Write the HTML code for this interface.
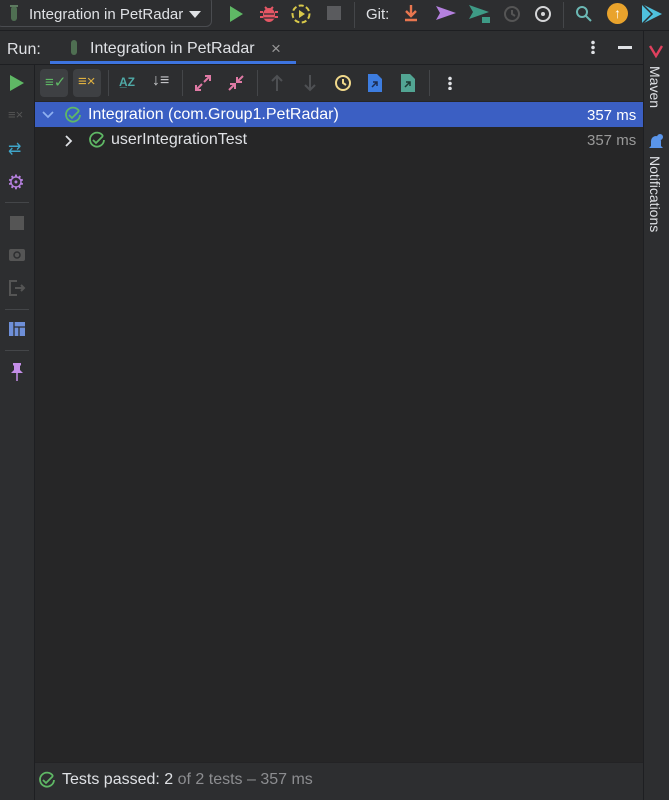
<!DOCTYPE html><html><head><style>
*{margin:0;padding:0;box-sizing:border-box}
body{width:669px;height:800px;background:#2d2e30;font-family:"Liberation Sans",sans-serif;color:#dfe1e5;position:relative;overflow:hidden;font-size:15px}
.a{position:absolute}
.sep{position:absolute;background:#444649}
</style></head><body>
<div class="a" style="left:0;top:0;width:669px;height:31px;background:#2d2e30;border-bottom:1px solid #1e1f22"></div>
<div class="a" style="left:-4px;top:-4px;width:216px;height:31px;border:1px solid #4a4c50;border-radius:6px"></div>
<svg class="a" style="left:8px;top:5px" width="12" height="18"><rect x="3" y="1" width="6" height="15" rx="3" fill="#4f6f52"/><rect x="2" y="0" width="8" height="2" fill="#5d7a60"/></svg>
<div class="a" style="left:29px;top:6px;font-size:15px">Integration in PetRadar</div>
<svg class="a" style="left:188px;top:9px" width="14" height="10"><path d="M1 2h12L7 9z" fill="#dfe1e5"/></svg>
<svg class="a" style="left:228px;top:5px" width="16" height="18"><path d="M2 1l13 8-13 8z" fill="#5fb865"/></svg>
<svg class="a" style="left:259px;top:4px" width="20" height="20"><ellipse cx="10" cy="11" rx="6" ry="7" fill="#e55765"/><path d="M4 8H1M4 13H1M16 8h3M16 13h3M6 3l2 2M14 3l-2 2" stroke="#e55765" stroke-width="2"/><path d="M5 10h10M5 14h10" stroke="#2d2e30" stroke-width="1.3"/></svg>
<svg class="a" style="left:290px;top:3px" width="22" height="22"><circle cx="11" cy="11" r="8.5" fill="none" stroke="#d9c94a" stroke-width="2" stroke-dasharray="5 2.5"/><path d="M9 7l6 4-6 4z" fill="#d9c94a"/></svg>
<div class="a" style="left:327px;top:6px;width:14px;height:14px;background:#5a5b5e"></div>
<div class="sep" style="left:354px;top:2px;width:1px;height:26px"></div>
<div class="a" style="left:366px;top:6px;color:#dfe1e5">Git:</div>
<svg class="a" style="left:403px;top:4px" width="16" height="20"><path d="M8 1v10M3 7l5 5 5-5M2 16h12" stroke="#e8764f" stroke-width="2.4" fill="none"/></svg>
<svg class="a" style="left:435px;top:4px" width="22" height="18"><path d="M1 2l20 7-20 7 4-7z" fill="#b480de"/></svg>
<svg class="a" style="left:468px;top:3px" width="24" height="22"><path d="M1 2l20 7-20 7 4-7z" fill="#3e9b86"/><rect x="14" y="14" width="8" height="6" fill="#3e9b86"/></svg>
<svg class="a" style="left:502px;top:4px" width="20" height="20"><circle cx="10" cy="10" r="7" fill="none" stroke="#555" stroke-width="2"/><path d="M10 6v4l3 2" stroke="#555" stroke-width="2" fill="none"/></svg>
<svg class="a" style="left:533px;top:4px" width="20" height="20"><circle cx="10" cy="10" r="7" fill="none" stroke="#d5d6d8" stroke-width="2"/><circle cx="10" cy="10" r="2" fill="#d5d6d8"/></svg>
<div class="sep" style="left:563px;top:2px;width:1px;height:26px"></div>
<svg class="a" style="left:575px;top:5px" width="18" height="18"><circle cx="7" cy="7" r="5" fill="none" stroke="#6bb8b4" stroke-width="2"/><path d="M11 11l5 5" stroke="#6bb8b4" stroke-width="2"/></svg>
<div class="a" style="left:607px;top:3px;width:21px;height:21px;border-radius:50%;background:#e9a32c;color:#fff;font-size:14px;text-align:center;line-height:21px;font-weight:bold">↑</div>
<svg class="a" style="left:640px;top:3px" width="24" height="22"><path d="M2 1l20 10-20 10z" fill="#4fc1dd"/><path d="M2 1l10 10L2 21" stroke="#2d2e30" stroke-width="1.5" fill="none"/></svg>
<div class="a" style="left:7px;top:41px;font-size:16px;color:#dfe1e5">Run:</div>
<svg class="a" style="left:69px;top:39px" width="10" height="18"><rect x="2" y="1" width="6" height="15" rx="3" fill="#4f6f52"/></svg>
<div class="a" style="left:90px;top:40px;font-size:16px">Integration in PetRadar</div>
<div class="a" style="left:271px;top:39px;color:#999;font-size:17px">×</div>
<div class="a" style="left:50px;top:61px;width:246px;height:3px;background:#3d74e0"></div>
<div class="a" style="left:591px;top:40px;width:4px;height:14px;background:radial-gradient(circle,#dfe1e5 1.6px,transparent 2px) 0 0/4px 5px"></div>
<div class="a" style="left:618px;top:46px;width:14px;height:3px;background:#dfe1e5"></div>
<div class="a" style="left:0;top:64px;width:643px;height:1px;background:#1e1f22"></div>
<div class="a" style="left:34px;top:65px;width:1px;height:735px;background:#1e1f22"></div>
<svg class="a" style="left:9px;top:74px" width="16" height="18"><path d="M1 1l14 8-14 8z" fill="#5fb865"/></svg>
<div class="a" style="left:8px;top:107px;color:#555;font-size:13px">≡×</div>
<div class="a" style="left:8px;top:139px;color:#3fa5c9;font-size:16px">⇄</div>
<div class="a" style="left:7px;top:170px;color:#b580de;font-size:20px">⚙</div>
<div class="sep" style="left:5px;top:202px;width:24px;height:1px"></div>
<div class="a" style="left:10px;top:216px;width:14px;height:14px;background:#555"></div>
<svg class="a" style="left:8px;top:246px" width="18" height="16"><rect x="1" y="3" width="16" height="12" rx="2" fill="#555"/><circle cx="9" cy="9" r="3" fill="none" stroke="#2d2e30" stroke-width="1.5"/></svg>
<svg class="a" style="left:8px;top:279px" width="18" height="18"><path d="M9 2H2v14h7" stroke="#555" stroke-width="2" fill="none"/><path d="M7 9h9M13 6l3 3-3 3" stroke="#555" stroke-width="2" fill="none"/></svg>
<div class="sep" style="left:5px;top:309px;width:24px;height:1px"></div>
<svg class="a" style="left:9px;top:322px" width="16" height="14"><rect width="16" height="14" fill="#6e8fd8"/><path d="M5 0v14M5 5h11M10 5v9" stroke="#2d2e30" stroke-width="1.3"/></svg>
<div class="sep" style="left:5px;top:350px;width:24px;height:1px"></div>
<svg class="a" style="left:10px;top:362px" width="14" height="20"><path d="M3 1h8v2l-1 1v4l3 3H1l3-3V4L3 3z" fill="#c48ee8"/><path d="M7 11v8" stroke="#c48ee8" stroke-width="1.5"/></svg>
<div class="a" style="left:35px;top:101px;width:608px;height:661px;background:#262627"></div>
<div class="a" style="left:35px;top:762px;width:608px;height:38px;background:#2d2e30;border-top:1px solid #232325"></div>
<div class="a" style="left:40px;top:69px;width:28px;height:28px;border-radius:4px;background:#3e4043"></div>
<div class="a" style="left:73px;top:69px;width:28px;height:28px;border-radius:4px;background:#3e4043"></div>
<div class="a" style="left:45px;top:73px;color:#5fb865;font-size:15px">≡✓</div>
<div class="a" style="left:78px;top:73px;color:#e0b140;font-size:15px">≡×</div>
<div class="sep" style="left:108px;top:70px;width:1px;height:26px"></div>
<div class="a" style="left:119px;top:75px;color:#4faaa7;font-size:12px;font-weight:bold">A̲Z</div>
<div class="a" style="left:152px;top:72px;color:#c4c5c8;font-size:16px">↓≡</div>
<div class="sep" style="left:182px;top:70px;width:1px;height:26px"></div>
<svg class="a" style="left:194px;top:74px" width="18" height="18"><path d="M10 8l6-6M11 2h5v5M8 10l-6 6M2 11v5h5" stroke="#e07aa5" stroke-width="2" fill="none"/></svg>
<svg class="a" style="left:227px;top:74px" width="18" height="18"><path d="M16 2l-6 6M10 3v5h5M2 16l6-6M3 10h5v5" stroke="#e07aa5" stroke-width="2" fill="none"/></svg>
<div class="sep" style="left:257px;top:70px;width:1px;height:26px"></div>
<svg class="a" style="left:270px;top:74px" width="14" height="18"><path d="M7 17V2M2 7l5-5 5 5" stroke="#4e5053" stroke-width="2" fill="none"/></svg>
<svg class="a" style="left:303px;top:74px" width="14" height="18"><path d="M7 1v15M2 11l5 5 5-5" stroke="#4e5053" stroke-width="2" fill="none"/></svg>
<svg class="a" style="left:333px;top:74px" width="20" height="18"><circle cx="10" cy="9" r="7" fill="none" stroke="#f0d88a" stroke-width="2"/><path d="M10 5v4l3 2" stroke="#f0d88a" stroke-width="2" fill="none"/></svg>
<svg class="a" style="left:368px;top:74px" width="14" height="18"><path d="M0 0h9l5 5v13H0z" fill="#3d7de0"/><path d="M4 13l5-5M5 8h4v4" stroke="#1d2c50" stroke-width="1.5" fill="none"/></svg>
<svg class="a" style="left:401px;top:74px" width="14" height="18"><path d="M0 0h9l5 5v13H0z" fill="#52a593"/><path d="M4 13l5-5M5 8h4v4" stroke="#1d3a33" stroke-width="1.5" fill="none"/></svg>
<div class="sep" style="left:429px;top:70px;width:1px;height:26px"></div>
<div class="a" style="left:448px;top:76px;width:4px;height:14px;background:radial-gradient(circle,#dfe1e5 1.6px,transparent 2px) 0 0/4px 5px"></div>
<div class="a" style="left:35px;top:102px;width:608px;height:25px;background:#3b5fc3"></div>
<svg class="a" style="left:41px;top:110px" width="14" height="10"><path d="M2 2l5 5 5-5" stroke="#8fb0f0" stroke-width="1.7" fill="none"/></svg>
<svg class="a" style="left:64px;top:106px" width="18" height="18"><path d="M15 5A7 7 0 1 0 16 9" stroke="#5fb865" stroke-width="1.8" fill="none"/><path d="M5 9l3 3 7-7" stroke="#5fb865" stroke-width="1.8" fill="none"/></svg>
<div class="a" style="left:88px;top:106px;font-size:16px;color:#fff">Integration (com.Group1.PetRadar)</div>
<div class="a" style="left:587px;top:107px;font-size:15px;color:#fff">357 ms</div>
<svg class="a" style="left:64px;top:134px" width="10" height="14"><path d="M2 2l5 5-5 5" stroke="#dfe1e5" stroke-width="1.8" fill="none"/></svg>
<svg class="a" style="left:88px;top:131px" width="18" height="18"><path d="M15 5A7 7 0 1 0 16 9" stroke="#5fb865" stroke-width="1.8" fill="none"/><path d="M5 9l3 3 7-7" stroke="#5fb865" stroke-width="1.8" fill="none"/></svg>
<div class="a" style="left:111px;top:131px;font-size:16px">userIntegrationTest</div>
<div class="a" style="left:587px;top:132px;font-size:15px;color:#999">357 ms</div>
<svg class="a" style="left:38px;top:771px" width="18" height="18"><path d="M15 5A7 7 0 1 0 16 9" stroke="#5fb865" stroke-width="1.8" fill="none"/><path d="M5 9l3 3 7-7" stroke="#5fb865" stroke-width="1.8" fill="none"/></svg>
<div class="a" style="left:62px;top:771px;font-size:16px">Tests passed: 2 <span style="color:#8c8d90">of 2 tests – 357 ms</span></div>
<div class="a" style="left:643px;top:31px;width:1px;height:769px;background:#1e1f22"></div>
<svg class="a" style="left:649px;top:44px" width="14" height="14"><path d="M1 2l6 10 6-10" stroke="#e0405e" stroke-width="2.4" fill="none"/></svg>
<div class="a" style="left:647px;top:66px;writing-mode:vertical-rl;font-size:14px;color:#dfe1e5">Maven</div>
<svg class="a" style="left:648px;top:134px" width="16" height="16"><path d="M3 12V7a5 5 0 0 1 10 0v5l2 2H1z" fill="#5a95ea"/><circle cx="12" cy="3" r="3" fill="#5a95ea"/></svg>
<div class="a" style="left:647px;top:156px;writing-mode:vertical-rl;font-size:14px;color:#dfe1e5">Notifications</div>
</body></html>
